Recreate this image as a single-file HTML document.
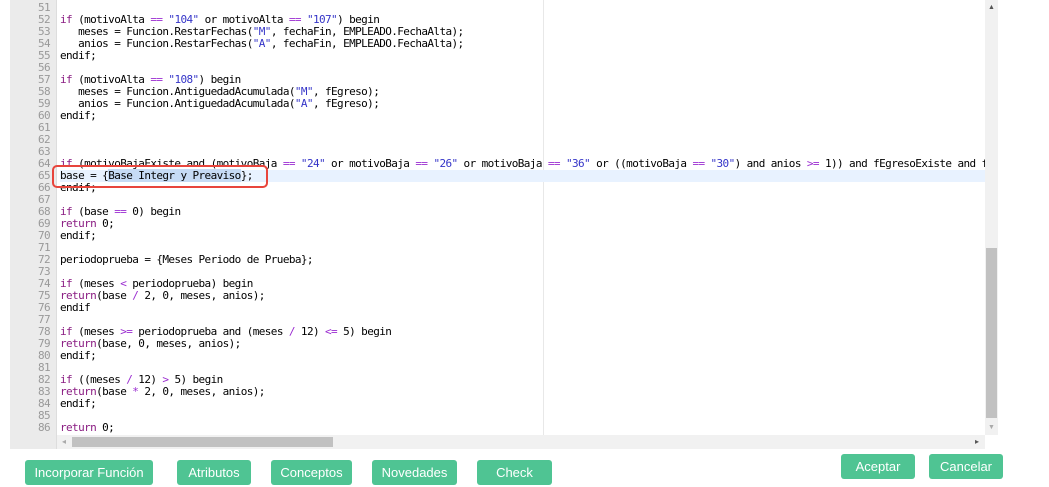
<!DOCTYPE html>
<html><head><meta charset="utf-8"><style>
body{margin:0;width:1049px;height:487px;background:#fff;position:relative;overflow:hidden;font-family:"Liberation Sans",sans-serif}
#ed{position:absolute;left:10px;top:0;width:988px;height:449px;background:#fff;overflow:hidden}
#gut{position:absolute;left:0;top:0;width:46px;height:449px;background:#ebebeb;border-right:1px solid #ddd}
.ln{position:absolute;left:0;width:40px;text-align:right;color:#999;font:11px/12px "DejaVu Sans Mono",monospace;letter-spacing:-0.6px}
.cl{position:absolute;left:50px;white-space:pre;color:#000;font:11px/12px "DejaVu Sans Mono",monospace;letter-spacing:-0.6px}
.k{color:#8a1c82}.s{color:#3434c8}.o{color:#9a2bd0}
#margin{position:absolute;left:533px;top:0;width:1px;height:435px;background:#e8e8e8}
#vs{position:absolute;left:985px;top:0;width:13px;height:435px;background:#f1f1f1}
#vt{position:absolute;left:986px;top:248px;width:11px;height:170px;background:#c1c1c1}
#hs{position:absolute;left:57px;top:435px;width:928px;height:14px;background:#f1f1f1}
#ht{position:absolute;left:72px;top:437px;width:261px;height:10px;background:#c1c1c1}
.b{position:absolute;background:#4fc493;color:#fff;font:13px/25px "Liberation Sans Narrow","Liberation Sans",sans-serif;text-align:center;border-radius:3px}
</style></head><body>
<div id="ed">
<div id="gut"></div>
<div id="margin"></div>
</div>
<div id="vs"></div><div id="vt"></div>
<div style="position:absolute;left:988px;top:4px;font-size:7px;color:#555">▲</div>
<div style="position:absolute;left:988px;top:424px;font-size:7px;color:#aaa">▼</div>
<div id="hs"></div><div id="ht"></div>
<div style="position:absolute;left:62px;top:437px;font-size:8px;color:#aaa">◂</div>
<div style="position:absolute;left:975px;top:437px;font-size:8px;color:#555">▸</div>
<div class="b" style="left:25px;top:460px;width:128px">Incorporar Función</div>
<div class="b" style="left:177px;top:460px;width:74px">Atributos</div>
<div class="b" style="left:271px;top:460px;width:81px">Conceptos</div>
<div class="b" style="left:372px;top:460px;width:85px">Novedades</div>
<div class="b" style="left:477px;top:460px;width:75px">Check</div>
<div class="b" style="left:841px;top:454px;width:74px">Aceptar</div>
<div class="b" style="left:929px;top:454px;width:74px">Cancelar</div>
<div style="position:absolute;left:10px;top:0;width:975px;height:435px;overflow:hidden">
<div class="ln" style="top:2px">51</div>
<div class="ln" style="top:14px">52</div><div class="cl" style="top:14px"><span class="k">if</span> (motivoAlta <span class="o">==</span> <span class="s">"104"</span> or motivoAlta <span class="o">==</span> <span class="s">"107"</span>) begin</div>
<div class="ln" style="top:26px">53</div><div class="cl" style="top:26px">   meses = Funcion.RestarFechas(<span class="s">"M"</span>, fechaFin, EMPLEADO.FechaAlta);</div>
<div class="ln" style="top:38px">54</div><div class="cl" style="top:38px">   anios = Funcion.RestarFechas(<span class="s">"A"</span>, fechaFin, EMPLEADO.FechaAlta);</div>
<div class="ln" style="top:50px">55</div><div class="cl" style="top:50px">endif;</div>
<div class="ln" style="top:62px">56</div>
<div class="ln" style="top:74px">57</div><div class="cl" style="top:74px"><span class="k">if</span> (motivoAlta <span class="o">==</span> <span class="s">"108"</span>) begin</div>
<div class="ln" style="top:86px">58</div><div class="cl" style="top:86px">   meses = Funcion.AntiguedadAcumulada(<span class="s">"M"</span>, fEgreso);</div>
<div class="ln" style="top:98px">59</div><div class="cl" style="top:98px">   anios = Funcion.AntiguedadAcumulada(<span class="s">"A"</span>, fEgreso);</div>
<div class="ln" style="top:110px">60</div><div class="cl" style="top:110px">endif;</div>
<div class="ln" style="top:122px">61</div>
<div class="ln" style="top:134px">62</div>
<div class="ln" style="top:146px">63</div>
<div class="ln" style="top:158px">64</div><div class="cl" style="top:158px"><span class="k">if</span> (motivoBajaExiste and (motivoBaja <span class="o">==</span> <span class="s">"24"</span> or motivoBaja <span class="o">==</span> <span class="s">"26"</span> or motivoBaja <span class="o">==</span> <span class="s">"36"</span> or ((motivoBaja <span class="o">==</span> <span class="s">"30"</span>) and anios <span class="o">&gt;=</span> 1)) and fEgresoExiste and f</div>
<div class="ln" style="top:170px">65</div><div class="cl" style="top:170px;background:#e8f2ff;width:925px">base = {<span style="background:#c6dbf5">Base Integr y Preaviso</span>};</div>
<div class="ln" style="top:182px">66</div><div class="cl" style="top:182px">endif;</div>
<div class="ln" style="top:194px">67</div>
<div class="ln" style="top:206px">68</div><div class="cl" style="top:206px"><span class="k">if</span> (base <span class="o">==</span> 0) begin</div>
<div class="ln" style="top:218px">69</div><div class="cl" style="top:218px"><span class="k">return</span> 0;</div>
<div class="ln" style="top:230px">70</div><div class="cl" style="top:230px">endif;</div>
<div class="ln" style="top:242px">71</div>
<div class="ln" style="top:254px">72</div><div class="cl" style="top:254px">periodoprueba = {Meses Periodo de Prueba};</div>
<div class="ln" style="top:266px">73</div>
<div class="ln" style="top:278px">74</div><div class="cl" style="top:278px"><span class="k">if</span> (meses <span class="o">&lt;</span> periodoprueba) begin</div>
<div class="ln" style="top:290px">75</div><div class="cl" style="top:290px"><span class="k">return</span>(base <span class="o">/</span> 2, 0, meses, anios);</div>
<div class="ln" style="top:302px">76</div><div class="cl" style="top:302px">endif</div>
<div class="ln" style="top:314px">77</div>
<div class="ln" style="top:326px">78</div><div class="cl" style="top:326px"><span class="k">if</span> (meses <span class="o">&gt;=</span> periodoprueba and (meses <span class="o">/</span> 12) <span class="o">&lt;=</span> 5) begin</div>
<div class="ln" style="top:338px">79</div><div class="cl" style="top:338px"><span class="k">return</span>(base, 0, meses, anios);</div>
<div class="ln" style="top:350px">80</div><div class="cl" style="top:350px">endif;</div>
<div class="ln" style="top:362px">81</div>
<div class="ln" style="top:374px">82</div><div class="cl" style="top:374px"><span class="k">if</span> ((meses <span class="o">/</span> 12) <span class="o">&gt;</span> 5) begin</div>
<div class="ln" style="top:386px">83</div><div class="cl" style="top:386px"><span class="k">return</span>(base <span class="o">*</span> 2, 0, meses, anios);</div>
<div class="ln" style="top:398px">84</div><div class="cl" style="top:398px">endif;</div>
<div class="ln" style="top:410px">85</div>
<div class="ln" style="top:422px">86</div><div class="cl" style="top:422px"><span class="k">return</span> 0;</div>
</div>
<div style="position:absolute;left:52px;top:165px;width:216px;height:23px;border:2px solid #e8453c;border-radius:5px;box-sizing:border-box"></div>
</body></html>
